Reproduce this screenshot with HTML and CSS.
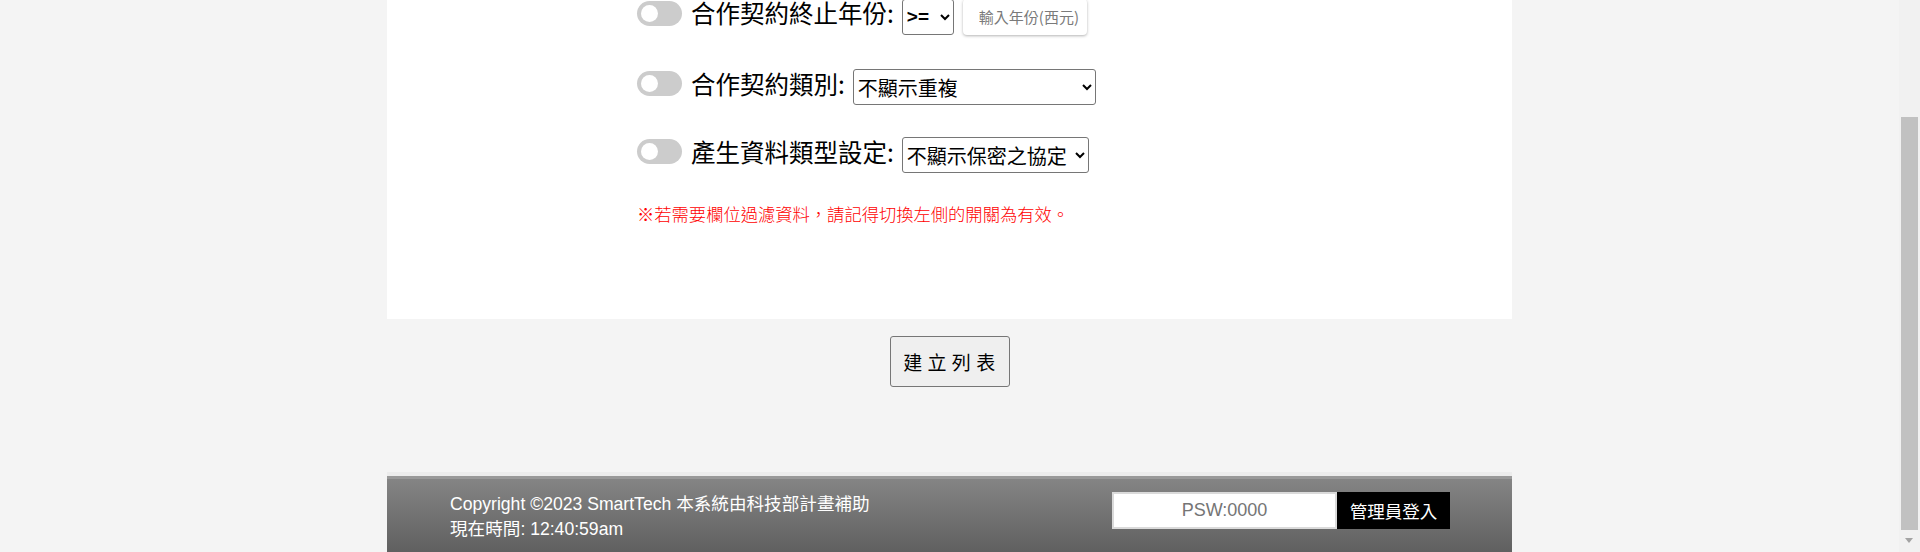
FILE: index.html
```html
<!DOCTYPE html>
<html lang="zh-Hant">
<head>
<meta charset="utf-8">
<title>建立列表</title>
<link rel="stylesheet" href="styles.css">
</head>
<body>
<div class="page">
  <div class="card">
    <div class="filters">
      <div class="row row-first">
        <span class="toggle"><span class="knob"></span></span>
        <span class="label">合作契約終止年份:</span>
        <select class="sel sel-op"><option>&gt;=</option></select>
        <input class="year" type="text" placeholder="輸入年份(西元)">
      </div>
      <div class="row">
        <span class="toggle"><span class="knob"></span></span>
        <span class="label">合作契約類別:</span>
        <select class="sel sel-wide"><option>不顯示重複</option></select>
      </div>
      <div class="row">
        <span class="toggle"><span class="knob"></span></span>
        <span class="label">產生資料類型設定:</span>
        <select class="sel sel-type"><option>不顯示保密之協定</option></select>
      </div>
    </div>
    <p class="note">※若需要欄位過濾資料，請記得切換左側的開關為有效。</p>
  </div>
  <div class="actions"><button class="build">建 立 列 表</button></div>
  <footer class="footer">
    <div class="footer-text">
      <div>Copyright ©2023 SmartTech 本系統由科技部計畫補助</div>
      <div>現在時間: 12:40:59am</div>
    </div>
    <div class="login">
      <input class="psw" type="text" placeholder="PSW:0000">
      <button class="admin">管理員登入</button>
    </div>
  </footer>
</div>
<div class="scrollbar"><div class="thumb"></div><div class="arrow"></div></div>
</body>
</html>
```
FILE: styles.css
```css
* { box-sizing: border-box; }
html, body {
  margin: 0;
  height: 552px;
  overflow: hidden;
  background: #f4f4f4;
}
body {
  font-family: "Noto Sans CJK TC", "Liberation Sans", sans-serif;
  color: #000;
}
.page {
  padding-right: 21px;
}
.card {
  width: 1125px;
  height: 324px;
  margin: -5px auto 0;
  background: #fff;
  padding-left: 250px;
}
.filters {
  display: flex;
  flex-direction: column;
  gap: 32px;
}
.row {
  display: flex;
  align-items: center;
  height: 36px;
}
.row-first {
  margin-bottom: 2.5px;
}
.toggle {
  flex: none;
  width: 45px;
  height: 25px;
  border-radius: 13px;
  background: #ccc;
  display: flex;
  align-items: center;
  padding-left: 4px;
}
.knob {
  width: 17px;
  height: 17px;
  border-radius: 50%;
  background: #fff;
}
.label {
  margin-left: 9px;
  font-size: 24.5px;
  line-height: 24px;
  white-space: nowrap;
}
.sel {
  margin-left: 8px;
  margin-top: 7px;
  height: 36px;
  font-family: "Noto Sans CJK TC", "Liberation Sans", sans-serif;
  font-size: 20px;
  color: #000;
  background: #fff;
  border: 1px solid #767676;
  border-radius: 3px;
}
.sel-op {
  width: 52px;
  font-family: "Liberation Sans", Arial, sans-serif;
  font-weight: bold;
  font-size: 19px;
}
.sel-wide {
  width: 243px;
}
.sel-type {
  width: 187px;
}
.year {
  margin-left: 9px;
  margin-top: 7px;
  width: 124px;
  height: 36px;
  border: none;
  border-radius: 4px;
  box-shadow: 0 1px 3px rgba(0, 0, 0, 0.3);
  padding: 0 6px 0 16px;
  font-family: "Noto Sans CJK TC", "Liberation Sans", sans-serif;
  font-size: 15px;
  background: #fff;
}
.year::placeholder {
  color: #7a7a7a;
}
.note {
  margin: 32.5px 0 0;
  font-size: 17.3px;
  font-weight: 300;
  line-height: 24px;
  color: #f00;
}
.actions {
  width: 1125px;
  margin: 0 auto;
  padding-top: 17px;
  display: flex;
  justify-content: center;
}
.build {
  width: 120px;
  height: 51px;
  font-family: "Noto Sans CJK TC", sans-serif;
  font-size: 19px;
  letter-spacing: 0.5px;
  color: #000;
  background: #efefef;
  border: 1px solid #767676;
  border-radius: 3px;
}
.footer {
  width: 1125px;
  height: 114px;
  margin: 85px auto 0;
  border-top: 4px solid #ececec;
  background: linear-gradient(to bottom, #999 0, #999 3px, #848484 3px, #4f4f4f 100%);
  padding: 16px 62px 0 63px;
  display: flex;
  justify-content: space-between;
  align-items: flex-start;
}
.footer-text {
  color: #fff;
  font-family: "Liberation Sans", Arial, "Noto Sans CJK TC", sans-serif;
  font-size: 17.6px;
  line-height: 25px;
}
.login {
  display: flex;
}
.psw {
  width: 225px;
  height: 37px;
  border: 2px solid #dadada;
  background: #fff;
  text-align: center;
  font-family: "Liberation Sans", Arial, sans-serif;
  font-size: 18px;
}
.psw::placeholder {
  color: #757575;
}
.admin {
  width: 113px;
  height: 37px;
  border: none;
  background: #000;
  color: #fff;
  font-family: "Noto Sans CJK TC", sans-serif;
  font-size: 17.5px;
  padding: 0;
}
.scrollbar {
  position: fixed;
  top: 0;
  right: 0;
  width: 21px;
  height: 552px;
  background: #f1f1f1;
}
.thumb {
  position: absolute;
  top: 117px;
  left: 2px;
  width: 17px;
  height: 413px;
  background: #c1c1c1;
}
.arrow {
  position: absolute;
  top: 538px;
  left: 6px;
  width: 0;
  height: 0;
  border-left: 4.5px solid transparent;
  border-right: 4.5px solid transparent;
  border-top: 5px solid #a3a3a3;
}
```
